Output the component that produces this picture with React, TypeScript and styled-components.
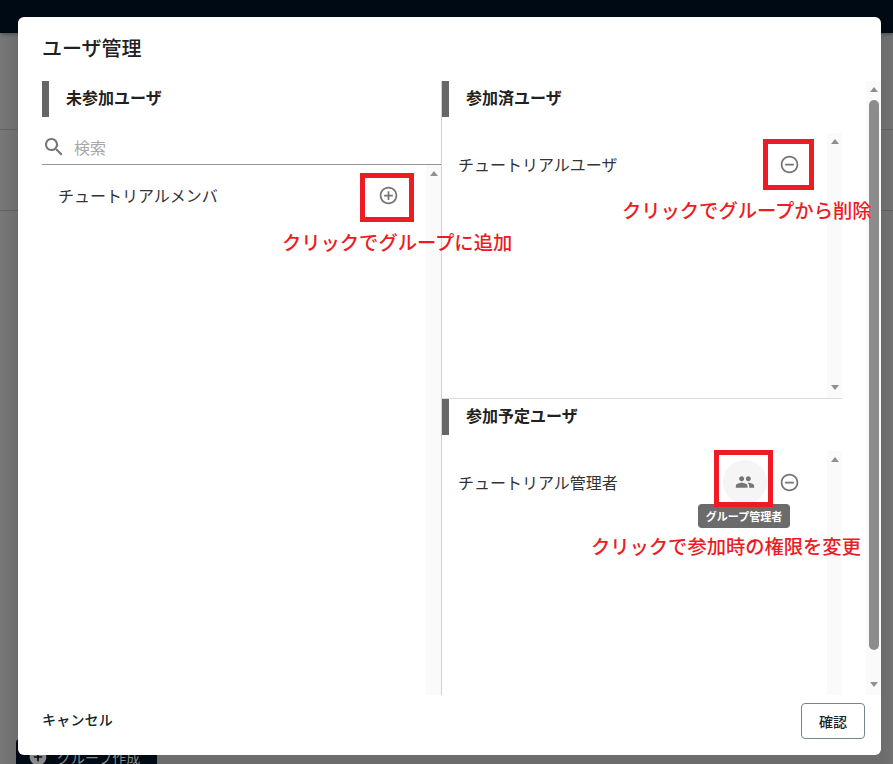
import React from 'react';
import styled, { createGlobalStyle } from 'styled-components';

const GlobalStyle = createGlobalStyle`
  html, body {
    margin: 0;
    height: 100%;
    overflow: hidden;
    font-family: Roboto, "Noto Sans CJK JP", sans-serif;
  }
`;

// 背景 (暗くしたページ)
const Page = styled.div`
  position: relative;
  width: 893px;
  height: 764px;
  overflow: hidden;
  background: linear-gradient(90deg, #787878 0, #6c6c6c 18px, #6c6c6c 881px, #727272 893px);
`;

const TopBar = styled.div`
  height: 33px;
  background: #000a14;
  box-shadow: 0 1px 4px rgba(0, 0, 0, 0.35);
`;

const BackgroundRule = styled.div<{ $top: number }>`
  position: absolute;
  left: 0;
  right: 0;
  top: ${p => p.$top}px;
  height: 1px;
  background: #5f5f5f;
`;

const BackgroundButton = styled.div`
  position: absolute;
  left: 16px;
  top: 739px;
  width: 141px;
  height: 36px;
  border-radius: 4px;
  background: #000a14;
  color: #8a8a8a;
  font-size: 14px;
  display: flex;
  align-items: center;
  padding-left: 12px;
  gap: 9px;
  box-sizing: border-box;
`;

const Dialog = styled.div`
  position: absolute;
  left: 18px;
  top: 17px;
  width: 863px;
  height: 738px;
  background: #fff;
  border-radius: 6px;
  display: flex;
  flex-direction: column;
`;

const Title = styled.h2`
  margin: 0;
  height: 64px;
  padding: 19px 24px 0;
  box-sizing: border-box;
  font-size: 20px;
  font-weight: 500;
  line-height: 27px;
  color: #212121;
`;

const Body = styled.div`
  position: relative;
  flex: 1;
  min-height: 0;
  display: flex;
  padding-left: 24px;
`;

const LeftColumn = styled.div`
  width: 400px;
  box-sizing: border-box;
  display: flex;
  flex-direction: column;
  border-right: 1px solid #d0d0d0;
`;

const RightColumn = styled.div`
  width: 400px;
  display: flex;
  flex-direction: column;
`;

const SectionTitle = styled.div`
  height: 36px;
  flex-shrink: 0;
  border-left: 7px solid #666;
  padding-left: 17px;
  font-size: 16px;
  font-weight: 700;
  line-height: 36px;
  color: #212121;
`;

const SearchRow = styled.div`
  height: 35px;
  margin-top: 13px;
  box-sizing: border-box;
  border-bottom: 1px solid #949494;
  display: flex;
  align-items: center;
  gap: 8px;
  flex-shrink: 0;
  font-size: 16px;
  color: #a8a8a8;
`;

const ListArea = styled.div<{ $pad: number }>`
  flex: 1;
  min-height: 0;
  display: flex;
  padding-top: ${p => p.$pad}px;
`;

const RowList = styled.div<{ $top: number }>`
  flex: 1;
  padding: ${p => p.$top}px 16px 0;
`;

const UserRow = styled.div`
  height: 48px;
  display: flex;
  align-items: center;
  justify-content: space-between;
  font-size: 16px;
  color: #333;
`;

const RowActions = styled.div`
  display: flex;
  align-items: center;
`;

const IconButton = styled.div<{ $filled?: boolean }>`
  width: 44px;
  height: 44px;
  border-radius: 50%;
  display: flex;
  align-items: center;
  justify-content: center;
  background: ${p => (p.$filled ? '#f5f5f5' : 'transparent')};
  color: #757575;
`;

const InnerScrollbar = styled.div`
  width: 15px;
  background: #fafafa;
  display: flex;
  flex-direction: column;
  align-items: center;
  justify-content: space-between;
  flex-shrink: 0;
`;

const Arrow = styled.span<{ $down?: boolean }>`
  width: 0;
  height: 0;
  margin: 6px 0 8px;
  flex-shrink: 0;
  border-left: 4.5px solid transparent;
  border-right: 4.5px solid transparent;
  ${p => (p.$down ? 'border-top: 5px solid #8f8f8f;' : 'border-bottom: 5px solid #8f8f8f;')}
`;

const RightSection = styled.div<{ $divider?: boolean; $grow: number }>`
  flex: ${p => p.$grow} 0 0;
  min-height: 0;
  display: flex;
  flex-direction: column;
  border-bottom: ${p => (p.$divider ? '1px solid #dcdcdc' : 'none')};
`;

const OuterScrollbar = styled.div`
  position: absolute;
  right: 0;
  top: 0;
  width: 15px;
  height: 100%;
  background: #fafafa;
  display: flex;
  flex-direction: column;
  align-items: center;
`;

const Thumb = styled.div`
  width: 10px;
  flex: 1;
  background: #8c8c8c;
  border-radius: 5px;
  margin-bottom: 26px;
`;

const Footer = styled.div`
  height: 60px;
  flex-shrink: 0;
  display: flex;
  align-items: center;
  justify-content: space-between;
  padding: 0 16px 8px 24px;
  box-sizing: border-box;
`;

const CancelButton = styled.div`
  font-size: 14px;
  font-weight: 500;
  letter-spacing: 0.2px;
  margin-bottom: 4px;
  color: #14232e;
`;

const ConfirmButton = styled.div`
  width: 64px;
  height: 36px;
  box-sizing: border-box;
  border: 1px solid #78848c;
  border-radius: 4px;
  display: flex;
  align-items: center;
  justify-content: center;
  font-size: 14px;
  font-weight: 500;
  color: #14232e;
`;

const Tooltip = styled.div`
  position: absolute;
  left: 698px;
  top: 504px;
  width: 92px;
  height: 24px;
  border-radius: 4px;
  background: #6b6b6b;
  color: #fff;
  font-size: 11px;
  font-weight: 700;
  display: flex;
  align-items: center;
  justify-content: center;
`;

const RedBox = styled.div<{ $x: number; $y: number; $w: number; $h: number }>`
  position: absolute;
  left: ${p => p.$x}px;
  top: ${p => p.$y}px;
  width: ${p => p.$w}px;
  height: ${p => p.$h}px;
  box-sizing: border-box;
  border: 5px solid #ed1c24;
`;

const RedNote = styled.div<{ $x: number; $y: number }>`
  position: absolute;
  left: ${p => p.$x}px;
  top: ${p => p.$y}px;
  color: #ed1c24;
  font-size: 19.3px;
  font-weight: 500;
  line-height: 26px;
  white-space: nowrap;
  font-family: "Noto Sans CJK JP", sans-serif;
`;

const PlusCircle = () => (
  <svg width="21" height="21" viewBox="0 0 24 24" fill="currentColor">
    <path d="M13 7h-2v4H7v2h4v4h2v-4h4v-2h-4V7zm-1-5C6.48 2 2 6.48 2 12s4.48 10 10 10 10-4.48 10-10S17.52 2 12 2zm0 18c-4.41 0-8-3.59-8-8s3.59-8 8-8 8 3.59 8 8-3.59 8-8 8z" />
  </svg>
);

const PlusCircleFilled = () => (
  <svg width="20" height="20" viewBox="0 0 24 24" fill="currentColor">
    <path d="M12 2C6.48 2 2 6.48 2 12s4.48 10 10 10 10-4.48 10-10S17.52 2 12 2zm5 11h-4v4h-2v-4H7v-2h4V7h2v4h4v2z" />
  </svg>
);

const MinusCircle = () => (
  <svg width="21" height="21" viewBox="0 0 24 24" fill="currentColor">
    <path d="M7 11v2h10v-2H7zm5-9C6.48 2 2 6.48 2 12s4.48 10 10 10 10-4.48 10-10S17.52 2 12 2zm0 18c-4.41 0-8-3.59-8-8s3.59-8 8-8 8 3.59 8 8-3.59 8-8 8z" />
  </svg>
);

const PeopleIcon = () => (
  <svg width="20" height="20" viewBox="0 0 24 24" fill="currentColor">
    <path d="M16 11c1.66 0 2.99-1.34 2.99-3S17.66 5 16 5c-1.66 0-3 1.34-3 3s1.34 3 3 3zm-8 0c1.66 0 2.99-1.34 2.99-3S9.66 5 8 5C6.34 5 5 6.34 5 8s1.34 3 3 3zm0 2c-2.33 0-7 1.17-7 3.5V19h14v-2.5c0-2.33-4.67-3.5-7-3.5zm8 0c-.29 0-.62.02-.97.05 1.16.84 1.97 1.97 1.97 3.45V19h6v-2.5c0-2.33-4.67-3.5-7-3.5z" />
  </svg>
);

const SearchIcon = () => (
  <svg width="24" height="24" viewBox="0 0 24 24" fill="#757575">
    <path d="M15.5 14h-.79l-.28-.27C15.41 12.59 16 11.11 16 9.5 16 5.91 13.09 3 9.5 3S3 5.91 3 9.5 5.91 16 9.5 16c1.61 0 3.09-.59 4.23-1.57l.27.28v.79l5 4.99L20.49 19l-4.99-5zm-6 0C7.01 14 5 11.99 5 9.5S7.01 5 9.5 5 14 7.01 14 9.5 11.99 14 9.5 14z" />
  </svg>
);

const App: React.FC = () => {
  return (
    <Page>
      <GlobalStyle />
      <TopBar />
      <BackgroundRule $top={129} />
      <BackgroundRule $top={210} />
      <BackgroundButton>
        <PlusCircleFilled />
        グループ作成
      </BackgroundButton>
      <Dialog>
        <Title>ユーザ管理</Title>
        <Body>
          <LeftColumn>
            <SectionTitle>未参加ユーザ</SectionTitle>
            <SearchRow>
              <SearchIcon />
              検索
            </SearchRow>
            <ListArea $pad={0}>
              <RowList $top={6}>
                <UserRow>
                  チュートリアルメンバ
                  <IconButton>
                    <PlusCircle />
                  </IconButton>
                </UserRow>
              </RowList>
              <InnerScrollbar>
                <Arrow />
              </InnerScrollbar>
            </ListArea>
          </LeftColumn>
          <RightColumn>
            <RightSection $divider $grow={318}>
              <SectionTitle>参加済ユーザ</SectionTitle>
              <ListArea $pad={16}>
                <RowList $top={7}>
                  <UserRow>
                    チュートリアルユーザ
                    <IconButton>
                      <MinusCircle />
                    </IconButton>
                  </UserRow>
                </RowList>
                <InnerScrollbar>
                  <Arrow />
                  <Arrow $down />
                </InnerScrollbar>
              </ListArea>
            </RightSection>
            <RightSection $grow={296}>
              <SectionTitle>参加予定ユーザ</SectionTitle>
              <ListArea $pad={16}>
                <RowList $top={7}>
                  <UserRow>
                    チュートリアル管理者
                    <RowActions>
                      <IconButton $filled>
                        <PeopleIcon />
                      </IconButton>
                      <IconButton>
                        <MinusCircle />
                      </IconButton>
                    </RowActions>
                  </UserRow>
                </RowList>
                <InnerScrollbar>
                  <Arrow />
                </InnerScrollbar>
              </ListArea>
            </RightSection>
          </RightColumn>
          <OuterScrollbar>
            <Arrow />
            <Thumb />
            <Arrow $down />
          </OuterScrollbar>
        </Body>
        <Footer>
          <CancelButton>キャンセル</CancelButton>
          <ConfirmButton>確認</ConfirmButton>
        </Footer>
      </Dialog>
      <Tooltip>グループ管理者</Tooltip>
      <RedBox $x={360} $y={173} $w={54} $h={49} />
      <RedBox $x={763} $y={139} $w={51} $h={51} />
      <RedBox $x={714} $y={450} $w={59} $h={57} />
      <RedNote $x={282} $y={229}>クリックでグループに追加</RedNote>
      <RedNote $x={622} $y={197}>クリックでグループから削除</RedNote>
      <RedNote $x={591} $y={533}>クリックで参加時の権限を変更</RedNote>
    </Page>
  );
};

export default App;
